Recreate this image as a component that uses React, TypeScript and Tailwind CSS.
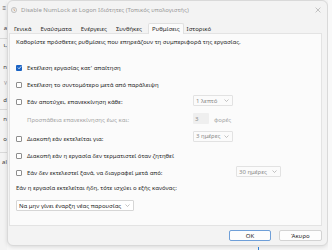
import React from "react";
import clsx from "clsx";

function Checkbox({ checked = false }: { checked?: boolean }) {
  if (checked) {
    return (
      <span className="flex h-[6px] w-[6px] shrink-0 items-center justify-center rounded-[1px] bg-[#1a63c4]">
        <svg width="5" height="5" viewBox="0 0 10 10">
          <path d="M1.8 5.2 4.1 7.5 8.4 2.6" fill="none" stroke="#fff" strokeWidth="1.7" />
        </svg>
      </span>
    );
  }
  return <span className="h-[6px] w-[6px] shrink-0 rounded-[1px] border border-[#8e8e8e] bg-white" />;
}

function Chevron() {
  return (
    <svg width="5" height="3" viewBox="0 0 10 6" className="shrink-0">
      <path d="M1 1 5 5 9 1" fill="none" stroke="#9a9a9a" strokeWidth="1.2" />
    </svg>
  );
}

function Select({ value, className, disabled = true }: { value: string; className: string; disabled?: boolean }) {
  return (
    <div
      className={clsx(
        "flex h-[11px] items-center justify-between rounded-[1px] border pl-[2px] pr-[3px]",
        disabled ? "border-[#e2e2e2] bg-[#fbfbfb] text-[#8a8a8a]" : "border-[#d6d6d6] bg-white text-[#1f1f1f]",
        className
      )}
    >
      <span>{value}</span>
      <Chevron />
    </div>
  );
}

function Row({ checked, label, h }: { checked?: boolean; label: string; h: string }) {
  return (
    <div className={clsx("flex items-center", h)}>
      <Checkbox checked={checked} />
      <span className="ml-[5px] text-[#2a2a2a]">{label}</span>
    </div>
  );
}

export default function App() {
  const tabs = ["Γενικά", "Εναύσματα", "Ενέργειες", "Συνθήκες", "Ρυθμίσεις", "Ιστορικό"];

  return (
    <div className="relative flex h-[250px] w-[332px] overflow-hidden bg-[#f7f7f7] font-['Noto_Sans',sans-serif] text-[6px] leading-none">
      {/* desktop behind the dialog */}
      <div className="flex w-[7px] shrink-0 flex-col items-end overflow-hidden bg-[#f3f3f3] pt-[5px] text-[6px] text-[#3a3a3a]">
        <span className="mr-[1px] text-[#555]">≡</span>
        <span className="mt-[14px]">a</span>
        <div className="mt-[7px] h-px w-full bg-[#d8d8d8]" />
        <span className="mt-[3px]">ι,</span>
        <span className="mt-[16px]">n</span>
        <span className="mt-[9px] text-[#9a9a9a]">γ</span>
        <span className="mt-[12px]">d</span>
        <div className="mt-[6px] h-px w-full bg-[#d8d8d8]" />
        <span className="mt-[6px]">n</span>
        <span className="mt-[14px]">o</span>
        <div className="mt-[10px] h-px w-full bg-[#d8d8d8]" />
        <span className="mt-[6px]">al</span>
      </div>

      {/* dialog window */}
      <div className="flex h-[246px] w-[321px] shrink-0 flex-col rounded-[6px] border border-[#d9d9d9] bg-[#f3f3f3] shadow-[0_1px_4px_rgba(0,0,0,0.12)]">
        <div className="flex h-[18px] shrink-0 items-center pl-[3px] pr-[6px] text-[#9a9a9a]">
          <svg width="6" height="6" viewBox="0 0 12 12" className="shrink-0">
            <circle cx="6" cy="6" r="5.2" fill="#ececec" stroke="#a8a8a8" strokeWidth="1.2" />
            <path d="M6 3v3.3l2 1.3" fill="none" stroke="#c9905a" strokeWidth="1.2" />
          </svg>
          <span className="ml-[4px]">Disable NumLock at Logon Ιδιότητες (Τοπικός υπολογιστής)</span>
          <svg width="6" height="6" viewBox="0 0 10 10" className="ml-auto">
            <path d="M1 1 9 9M9 1 1 9" stroke="#a0a0a0" strokeWidth="1" />
          </svg>
        </div>

        <div className="relative z-10 -mb-px flex h-[15px] shrink-0 items-end pl-[3px]">
          {tabs.map((t) => (
            <div
              key={t}
              className={clsx(
                "flex h-[11px] items-center px-[3px] text-[#2b2b2b]",
                t === "Ρυθμίσεις" ? "rounded-t-[2px] border border-b-0 border-[#e0e0e0] bg-[#fbfbfb]" : "mr-[3px]"
              )}
            >
              {t}
            </div>
          ))}
        </div>

        <div className="ml-[1px] mr-[5px] flex h-[193px] shrink-0 flex-col border border-[#e3e3e3] bg-[#fbfbfb] pl-[6px] pt-[3px] text-[#2a2a2a]">
          <div className="flex h-[10px] items-center">
            Καθορίστε πρόσθετες ρυθμίσεις που επηρεάζουν τη συμπεριφορά της εργασίας.
          </div>
          <div className="h-[12px]" />
          <Row checked label="Εκτέλεση εργασίας κατ' απαίτηση" h="h-[17px]" />
          <Row label="Εκτέλεση το συντομότερο μετά από παράλειψη" h="h-[17px]" />
          <div className="flex h-[18px] items-center">
            <div className="flex w-[177px] items-center">
              <Checkbox />
              <span className="ml-[5px]">Εάν αποτύχει, επανεκκίνηση κάθε:</span>
            </div>
            <Select value="1 λεπτό" className="mb-[3px] w-[40px]" />
          </div>
          <div className="flex h-[18px] items-center">
            <span className="ml-[11px] w-[166px] text-[#a5a5a5]">Προσπάθεια επανεκκίνησης έως και:</span>
            <div className="mb-[3px] flex h-[11px] w-[16px] items-center rounded-[1px] bg-[#efefef] pl-[2px] text-[#8a8a8a]">3</div>
            <span className="ml-[5px] text-[#a5a5a5]">φορές</span>
          </div>
          <div className="flex h-[19px] items-center">
            <div className="flex w-[177px] items-center">
              <Checkbox />
              <span className="ml-[5px]">Διακοπή εάν εκτελείται για:</span>
            </div>
            <Select value="3 ημέρες" className="mb-[5px] w-[40px]" />
          </div>
          <Row label="Διακοπή εάν η εργασία δεν τερματιστεί όταν ζητηθεί" h="h-[16px]" />
          <div className="flex h-[18px] items-center">
            <div className="flex w-[220px] items-center">
              <Checkbox />
              <span className="ml-[5px]">Εάν δεν εκτελεστεί ξανά, να διαγραφεί μετά από:</span>
            </div>
            <Select value="30 ημέρες" className="mb-[3px] w-[45px]" />
          </div>
          <div className="flex h-[12px] items-center">Εάν η εργασία εκτελείται ήδη, τότε ισχύει ο εξής κανόνας:</div>
          <div className="mt-[6px]">
            <Select value="Να μην γίνει έναρξη νέας παρουσίας" className="w-[118px]" disabled={false} />
          </div>
        </div>

        <div className="mt-[4px] flex justify-end gap-[8px] pr-[5px] text-[#1f1f1f]">
          <div className="flex h-[11px] w-[42px] items-center justify-center rounded-[2px] border border-[#6f9fd8] bg-[#fdfdfd]">
            OK
          </div>
          <div className="flex h-[11px] w-[43px] items-center justify-center rounded-[2px] border border-[#d3d3d3] bg-[#fdfdfd]">
            Άκυρο
          </div>
        </div>
      </div>

      <div className="flex-1 bg-[#f9f9f9]" />
      <div className="absolute left-[258px] top-[247px] h-[3px] w-px bg-[#2f7fd6]" />
    </div>
  );
}
